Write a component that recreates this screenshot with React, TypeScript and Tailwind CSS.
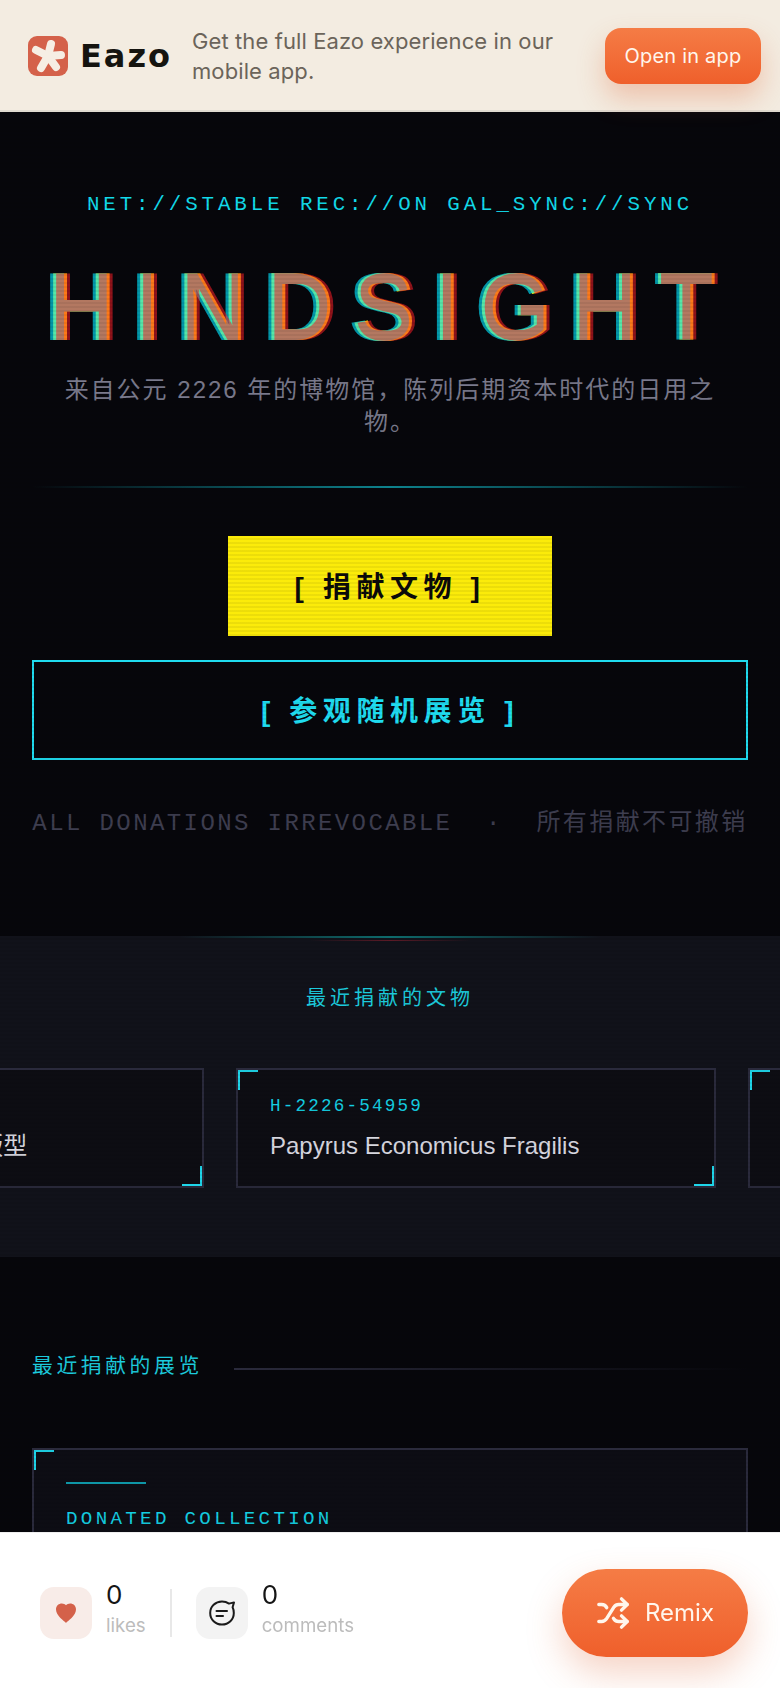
import { Shuffle } from "lucide-react";
import React from "react";

type Artifact = {
  id: string;
  title: string;
};

const artifacts: Artifact[] = [
  { id: "H-2226-54958", title: "通勤工位标准A4模板版型" },
  { id: "H-2226-54959", title: "Papyrus Economicus Fragilis" },
  { id: "H-2226-54960", title: "Plasticus Domesticus" },
];

const sans = "font-['Liberation_Sans','Noto_Sans_CJK_SC',sans-serif]";
const mono = "font-['Liberation_Mono','Noto_Sans_CJK_SC',monospace]";
const ui = "font-['Inter','Noto_Sans',sans-serif]";

const CornerTL = () => (
  <span className="absolute top-0 left-0 w-5 h-5 border-t-2 border-l-2 border-[#1fd6ea]" />
);

const CornerBR = () => (
  <span className="absolute bottom-0 right-0 w-5 h-5 border-b-2 border-r-2 border-[#1fd6ea]" />
);

const LogoMark = () => (
  <svg width="40" height="40" viewBox="0 0 40 40">
    <rect width="40" height="40" rx="9" fill="#d4614a" />
    <g stroke="#f6eee4" strokeWidth="8" strokeLinecap="round">
      <line x1="20" y1="20" x2="23" y2="8" />
      <line x1="20" y1="20" x2="33" y2="19" />
      <line x1="20" y1="20" x2="28" y2="31" />
      <line x1="20" y1="20" x2="13" y2="32" />
      <line x1="20" y1="20" x2="8" y2="14" />
    </g>
  </svg>
);

const HeartIcon = () => (
  <svg width="22" height="22" viewBox="0 0 22 22">
    <path
      d="M11 21 C9.5 19 1 14 1 7.5 C1 3.5 4 1.5 6.8 1.5 C8.6 1.5 10 2.3 11 3.2 C12 2.3 13.4 1.5 15.2 1.5 C18 1.5 21 3.5 21 7.5 C21 14 12.5 19 11 21 Z"
      fill="#d4614a"
    />
  </svg>
);

const CommentIcon = () => (
  <svg width="26" height="26" viewBox="0 0 26 26" fill="none" stroke="#1a1a1a" strokeWidth="2" strokeLinecap="round">
    <path d="M20 3.6 L25 2.4 L23.6 7.2 C24.4 8.8 24.8 10.6 24.8 13 C24.8 19.6 19.6 24.6 13 24.6 C6.4 24.6 1.2 19.6 1.2 13 C1.2 6.4 6.4 1.6 13 1.6 C15.8 1.6 18.2 2.4 20 3.6 Z" strokeLinejoin="round" />
    <line x1="7.5" y1="11" x2="18" y2="11" />
    <line x1="7.5" y1="16" x2="14" y2="16" />
  </svg>
);

export default function App() {
  return (
    <div className="relative w-[780px] h-[1688px] overflow-hidden bg-[#06060b]">
      {/* app banner */}
      <div className={`relative z-20 flex items-center h-[112px] pt-[2px] pl-7 pr-[19px] bg-[#f3ece1] border-b-2 border-[#dfdad0] ${ui}`}>
        <LogoMark />
        <span className="ml-3 w-[100px] font-['DejaVu_Sans',sans-serif] text-[32px] font-bold leading-none tracking-[2px] text-[#15140f]">Eazo</span>
        <p className="ml-[12px] w-[380px] text-[22px] leading-[30px] tracking-[0.1px] text-[#6b645a]">
          Get the full Eazo experience in our mobile app.
        </p>
        <button className="ml-auto w-[156px] h-14 rounded-2xl bg-gradient-to-b from-[#f57c45] to-[#ef5f2b] text-[20px] tracking-[0.2px] text-[#fff6ec] shadow-[0_14px_28px_rgba(224,96,48,0.3)]">
          Open in app
        </button>
      </div>

      {/* hero */}
      <section className="flex flex-col items-center h-[824px] px-8 pt-[79px]">
        <p className={`${mono} text-[20.8px] leading-7 tracking-[3.9px] text-[#12dcec] whitespace-nowrap`}>
          NET://STABLE REC://ON GAL_SYNC://SYNC
        </p>
        <h1
          className={`${sans} relative mt-[35px] text-[96px] leading-[106px] font-bold tracking-[17.6px] text-[#faeb0a] whitespace-nowrap before:content-['HINDSIGHT'] before:absolute before:left-[-3px] before:top-0 before:text-[#00e5ff] before:opacity-65 after:content-['HINDSIGHT'] after:absolute after:left-[3px] after:top-0 after:text-[#ff1e28] after:opacity-55`}
        >
          HINDSIGHT
        </h1>
        <p className={`${sans} mt-[14px] w-[660px] text-center text-[24px] leading-[32px] tracking-[2px] text-[#7a7a8c]`}>
          来自公元 2226 年的博物馆，陈列后期资本时代的日用之物。
        </p>
        <div className="mt-[48px] w-full h-0.5 bg-gradient-to-r from-transparent via-[#0e8a96] to-transparent" />
        <button className={`${sans} mt-[48px] w-[324px] h-[100px] pt-1 bg-[#fbeb0a] text-[28px] font-bold tracking-[5.6px] text-[#0a0a0a]`}>
          [ 捐献文物 ]
        </button>
        <button className={`${sans} mt-6 w-full h-[100px] pt-1 border-2 border-[#1fdcf0] text-[28px] font-bold tracking-[5.6px] text-[#1fdcf0]`}>
          [ 参观随机展览 ]
        </button>
        <p className={`${mono} mt-[48px] text-[24px] leading-8 tracking-[2.4px] text-[#3e3e50] whitespace-pre`}>
          {"ALL DONATIONS IRREVOCABLE  ·  所有捐献不可撤销"}
        </p>
      </section>

      {/* recent artifacts */}
      <section className="relative h-[321px] bg-[#11121a] pt-[47px]">
        <div className="absolute top-0 left-[180px] right-[180px] h-0.5 bg-gradient-to-r from-transparent via-[#0d6a6c] to-transparent" />
        <div className="absolute top-1 left-[310px] right-[310px] h-px bg-gradient-to-r from-transparent via-[#5c1a26] to-transparent" />
        <h2 className={`${sans} text-center text-[20px] leading-[30px] tracking-[4px] text-[#1ccbdd]`}>最近捐献的文物</h2>
        <div className="flex gap-8 mt-[55px] ml-[-276px]">
          {artifacts.map((item) => (
            <div
              key={item.id}
              className="relative shrink-0 w-[480px] h-[120px] bg-[#0d0d13] border-2 border-[#2a2a3c] px-8 pt-6"
            >
              <CornerTL />
              <CornerBR />
              <p className={`${mono} text-[17.6px] leading-6 tracking-[2.2px] text-[#14cfe2]`}>{item.id}</p>
              <p className={`${sans} mt-3 text-[24px] leading-8 text-[#d8d8e0] whitespace-nowrap`}>{item.title}</p>
            </div>
          ))}
        </div>
      </section>

      {/* recent exhibitions */}
      <section className="px-8 pt-[94px]">
        <div className="flex items-center gap-[31px]">
          <h2 className={`${sans} text-[20.8px] leading-[30px] tracking-[3.6px] text-[#1ccbdd] whitespace-nowrap`}>最近捐献的展览</h2>
          <div className="flex-1 h-0.5 mt-1.5 bg-gradient-to-r from-[#2a2a3c] to-transparent" />
        </div>
        <div className="relative mt-[67px] h-[300px] bg-[#0d0d14] border-2 border-[#2a2a3c] px-8 pt-[32px]">
          <CornerTL />
          <div className="w-20 h-0.5 bg-[#0f9fb0]" />
          <p className={`${mono} mt-[23px] text-[19.2px] leading-6 tracking-[3.3px] text-[#14cfe2] whitespace-nowrap`}>
            DONATED COLLECTION
          </p>
        </div>
      </section>

      {/* scanlines */}
      <div className="pointer-events-none absolute inset-0 z-10 bg-[repeating-linear-gradient(0deg,rgba(0,0,0,0.06)_0px,rgba(0,0,0,0.06)_2px,transparent_2px,transparent_4px)]" />

      {/* bottom bar */}
      <div className={`fixed bottom-0 left-0 z-20 flex items-center w-[780px] h-[156px] pt-1 bg-white pl-10 pr-8 border-t border-[#eeeeee] ${ui}`}>
        <div className="flex items-center justify-center w-[52px] h-[52px] rounded-[14px] bg-[#f8ece8]">
          <HeartIcon />
        </div>
        <div className="ml-[14px] flex flex-col -mt-2">
          <span className="mb-1 text-[26px] leading-[30px] text-[#151515]">0</span>
          <span className="text-[18.7px] leading-6 text-[#bcbcbc]">likes</span>
        </div>
        <div className="mx-6 w-0.5 h-12 bg-[#e8e8e8]" />
        <div className="flex items-center justify-center w-[52px] h-[52px] rounded-[14px] bg-[#f3f3f3]">
          <CommentIcon />
        </div>
        <div className="ml-[14px] flex flex-col -mt-2">
          <span className="mb-1 text-[26px] leading-[30px] text-[#151515]">0</span>
          <span className="text-[18.7px] leading-6 text-[#bcbcbc]">comments</span>
        </div>
        <button className="ml-auto flex items-center justify-center gap-[15px] w-[186px] h-[88px] rounded-full bg-gradient-to-b from-[#f57c45] to-[#ef5f2b] text-[24px] text-[#fff6ec] shadow-[0_16px_36px_rgba(224,96,48,0.28)]">
          <Shuffle size={34} strokeWidth={2.4} />
          Remix
        </button>
      </div>
    </div>
  );
}
